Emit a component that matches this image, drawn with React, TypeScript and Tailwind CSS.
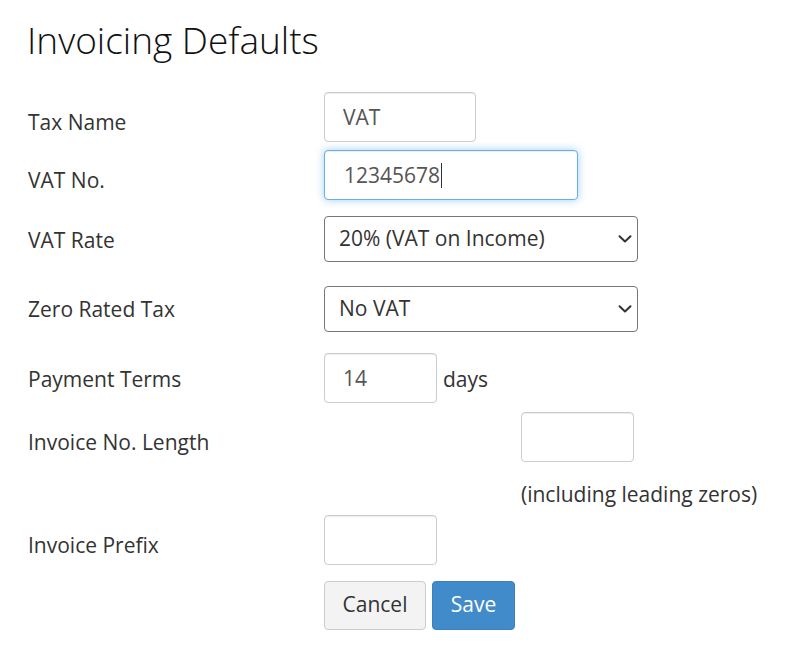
import React from "react";

const font = { fontFamily: '"Open Sans", "Liberation Sans", sans-serif' };

const inputCls =
  "h-[50px] rounded-[4px] border border-[#cccccc] bg-white px-[18px] text-[21px] text-[#555555] shadow-[inset_0_1px_1px_rgba(0,0,0,0.075)] outline-none";

const Chevron: React.FC = () => (
  <svg
    className="pointer-events-none absolute right-[6px] top-1/2 -translate-y-1/2"
    width="14"
    height="9"
    viewBox="0 0 14 9"
    fill="none"
  >
    <path d="M1.5 1.8 L7 7 L12.5 1.8" stroke="#333" strokeWidth="2" strokeLinecap="round" strokeLinejoin="round" />
  </svg>
);

const Select: React.FC<{ value: string; options: string[] }> = ({ value, options }) => (
  <div className="relative w-[314px]">
    <select
      defaultValue={value}
      className="h-[46px] w-full appearance-none rounded-[4px] border border-[#767676] bg-white pl-[14px] pr-8 text-[21px] text-[#333333] outline-none"
    >
      {options.map((o) => (
        <option key={o}>{o}</option>
      ))}
    </select>
    <Chevron />
  </div>
);

const Label: React.FC<{ pt: string; children: React.ReactNode }> = ({ pt, children }) => (
  <label className={`w-[324px] shrink-0 pl-[28px] text-[21px] leading-[30px] text-[#333333] ${pt}`}>
    {children}
  </label>
);

export default function App() {
  return (
    <div className="min-h-[655px] bg-white pt-[20px]" style={font}>
      <h1 className="pl-[27px] text-[37px] font-light leading-[1.1] text-[#111111]">Invoicing Defaults</h1>

      <form className="mt-[31px] flex flex-col" onSubmit={(e) => e.preventDefault()}>
        <div className="flex">
          <Label pt="pt-[15px]">Tax Name</Label>
          <input className={`${inputCls} w-[152px]`} defaultValue="VAT" />
        </div>

        <div className="mt-[8px] flex">
          <Label pt="pt-[15px]">VAT No.</Label>
          <div className="flex h-[50px] w-[254px] items-center rounded-[4px] border border-[#66afe9] bg-white pl-[19px] pt-[2px] text-[21px] text-[#555555] shadow-[inset_0_1px_1px_rgba(0,0,0,0.075),0_0_8px_rgba(102,175,233,0.6)]">
            12345678
            <span className="ml-[1px] inline-block h-[25px] w-px bg-[#333333]" />
          </div>
        </div>

        <div className="mt-[16px] flex">
          <Label pt="pt-[9px]">VAT Rate</Label>
          <Select value="20% (VAT on Income)" options={["20% (VAT on Income)", "5% (VAT on Income)", "No VAT"]} />
        </div>

        <div className="mt-[24px] flex">
          <Label pt="pt-[8px]">Zero Rated Tax</Label>
          <Select value="No VAT" options={["No VAT", "Zero Rated Income"]} />
        </div>

        <div className="mt-[21px] flex">
          <Label pt="pt-[11px]">Payment Terms</Label>
          <input className={`${inputCls} w-[113px]`} defaultValue="14" />
          <span className="ml-[6px] pt-[11px] text-[21px] leading-[30px] text-[#333333]">days</span>
        </div>

        <div className="mt-[9px] flex">
          <Label pt="pt-[15px]">Invoice No. Length</Label>
          <div className="ml-[197px] flex flex-col">
            <input className={`${inputCls} w-[113px]`} defaultValue="" />
            <span className="mt-[17px] text-[21px] leading-[30px] whitespace-nowrap text-[#333333]">
              (including leading zeros)
            </span>
          </div>
        </div>

        <div className="mt-[6px] flex">
          <Label pt="pt-[15px]">Invoice Prefix</Label>
          <input className={`${inputCls} w-[113px]`} defaultValue="" />
        </div>

        <div className="mt-[16px] flex pl-[324px] gap-[6px]">
          <button
            type="button"
            className="h-[49px] w-[102px] rounded-[4px] border border-[#cccccc] bg-[#f3f3f3] text-[21px] text-[#333333]"
          >
            Cancel
          </button>
          <button
            type="submit"
            className="h-[49px] w-[83px] rounded-[4px] border border-[#3a7fbf] bg-[#428bca] text-[21px] text-white"
          >
            Save
          </button>
        </div>
      </form>
    </div>
  );
}
